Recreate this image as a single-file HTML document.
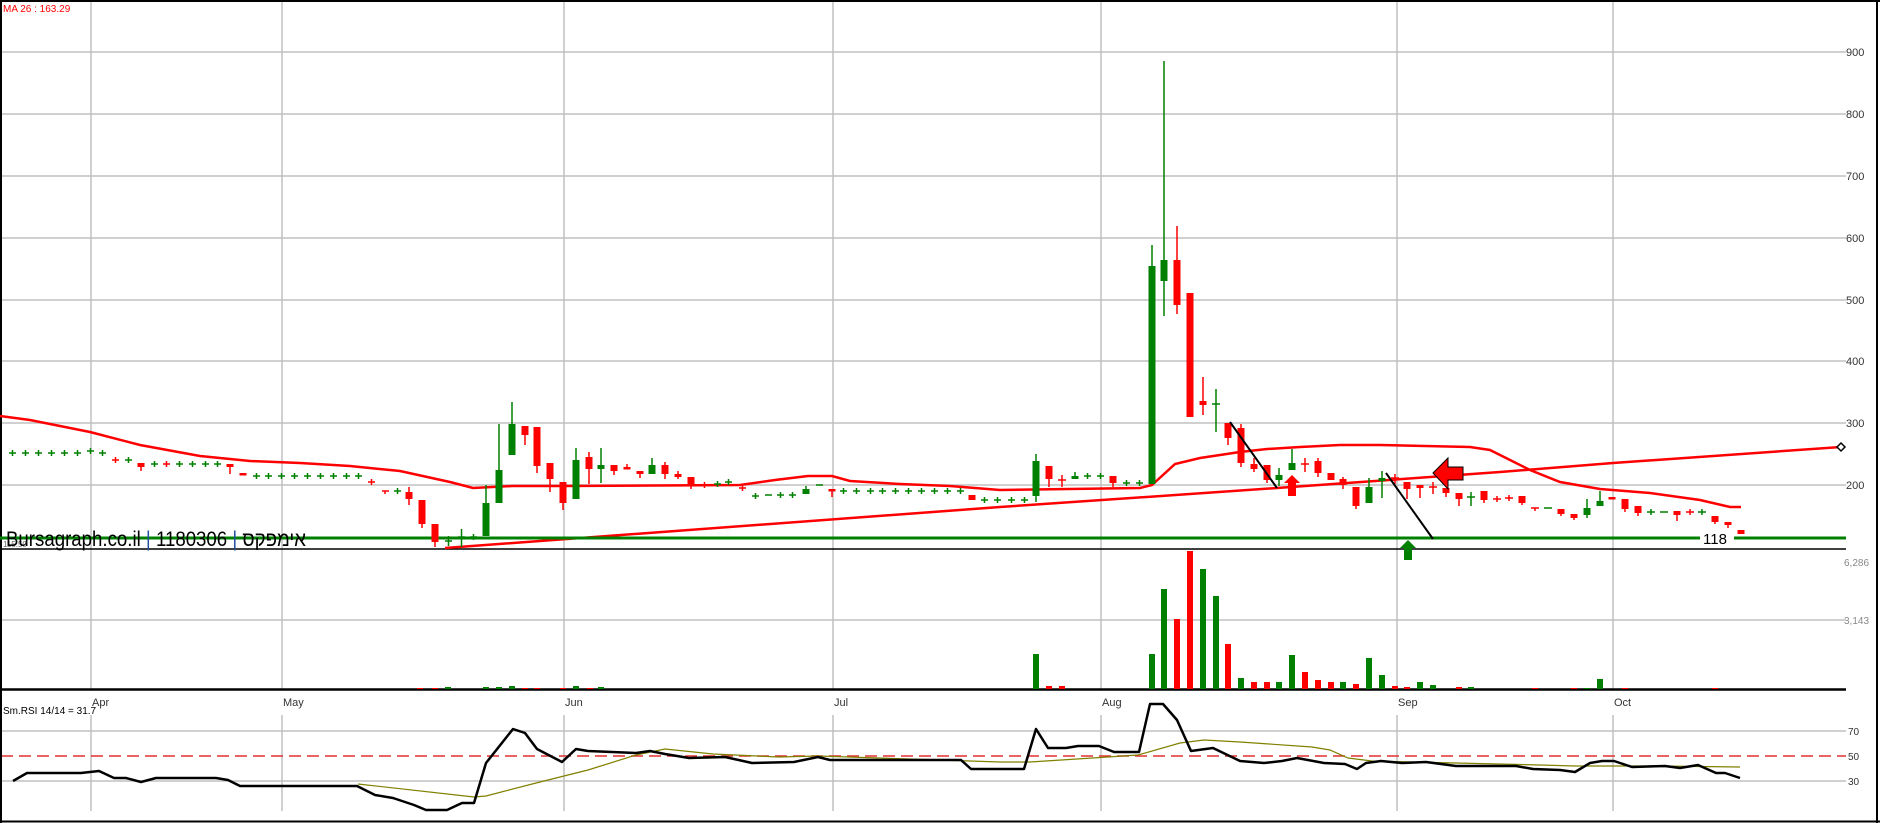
<!DOCTYPE html>
<html><head><meta charset="utf-8"><style>
html,body{margin:0;padding:0;background:#fff;}
svg{display:block;}
text{font-family:"Liberation Sans","Noto Sans CJK JP",sans-serif;}
</style></head><body>
<svg width="1880" height="823" viewBox="0 0 1880 823" xmlns="http://www.w3.org/2000/svg">
<rect width="1880" height="823" fill="#fff"/>
<g stroke="#c0c0c0" stroke-width="1.5" fill="none">
<path d="M1 52H1846M1 114H1846M1 176H1846M1 238H1846M1 300H1846M1 361H1846M1 423H1846M1 485H1846M1 620H1846M1 731H1846M1 781H1846"/>
<path d="M91 0V549M282 0V549M564 0V549M833 0V549M1101 0V549M1397 0V549M1613 0V549"/>
<path d="M91 549V689M282 549V689M564 549V689M833 549V689M1101 549V689M1397 549V689M1613 549V689"/>
<path d="M91 715V811M282 715V811M564 715V811M833 715V811M1101 715V811M1397 715V811M1613 715V811"/>
</g>
<line x1="1" y1="756" x2="1846" y2="756" stroke="#e03030" stroke-width="1.5" stroke-dasharray="12,6"/>
<g stroke="#000" fill="none">
<path d="M1 0V823M0 1H1880M1877 0V823M0 821.5H1880" stroke-width="2"/>
<path d="M0 549H1846" stroke-width="1.5"/>
<path d="M0 689.5H1846" stroke-width="2.5"/>
</g>
<g font-size="11" fill="#333">
<text x="1846" y="56">900</text><text x="1846" y="118">800</text><text x="1846" y="180">700</text><text x="1846" y="242">600</text><text x="1846" y="304">500</text><text x="1846" y="365">400</text><text x="1846" y="427">300</text><text x="1846" y="489">200</text>
</g>
<g font-size="10" fill="#888"><text x="1844" y="566">6,286</text><text x="1844" y="624">3,143</text></g>
<g font-size="10" fill="#333"><text x="1848" y="735">70</text><text x="1848" y="760">50</text><text x="1848" y="785">30</text></g>
<g font-size="11" fill="#333"><text x="92" y="706">Apr</text><text x="283" y="706">May</text><text x="565" y="706">Jun</text><text x="834" y="706">Jul</text><text x="1102" y="706">Aug</text><text x="1398" y="706">Sep</text><text x="1614" y="706">Oct</text></g>
<text x="3" y="714" font-size="10" fill="#000">Sm.RSI 14/14 = 31.7</text>
<text x="3" y="12" font-size="10" fill="#ff0000">MA 26 : 163.29</text>
<g stroke="#ff0000" stroke-width="2.5" fill="none">
<polyline points="0,416 30,420 90,432 140,445 200,456 250,461 300,463 350,466 400,471 450,482 473,488 512,486 563,486 740,485 775,480 808,476 832,476 850,481 900,484 950,486 1000,490 1140,488 1152,485 1175,464 1200,458 1240,452 1267,449 1300,447 1340,445 1380,445 1470,447 1490,450 1530,470 1560,482 1600,489 1650,493 1700,500 1730,507 1741,507"/>
<polyline points="445,548 1000,507 1277,488 1500,472 1613,463 1841,447"/>
</g>
<path d="M1841 443l4 4-4 4-4-4z" fill="#fff" stroke="#000" stroke-width="1.5"/>
<line x1="0" y1="538" x2="1846" y2="538" stroke="#008000" stroke-width="3"/>
<rect x="1700" y="530" width="34" height="16" fill="#fff"/>
<text x="1703" y="544" font-size="15" fill="#000">118</text>
<text x="3" y="547" font-size="8" fill="#666">115.50</text>
<g stroke="#008000" stroke-width="1.5" fill="none">
<path d="M9 453h7M12.5 450v6M22 453h7M25.5 450v6M35 453h7M38.5 450v6M48 453h7M51.5 450v6M61 453h7M64.5 450v6M74 453h7M77.5 450v6M87 451h7M90.5 448v6M99 453h7M102.5 450v6M125 460h7M128.5 457v6M151 464h7M154.5 461v6M176 464h7M179.5 461v6M189 464h7M192.5 461v6M202 464h7M205.5 461v6M214 464h7M217.5 461v6M253 476h7M256.5 473v6M265 476h7M268.5 473v6M278 476h7M281.5 473v6M291 476h7M294.5 473v6M304 476h7M307.5 473v6M317 476h7M320.5 473v6M330 476h7M333.5 473v6M343 476h7M346.5 473v6M355 476h7M358.5 473v6M394 491h7M397.5 488v6M445 541h7M448.5 536v10M458 537h7M461.5 529v18M470 537h7M473.5 534v6M714 484h7M717.5 481v6M725 482h7M728.5 479v6M752 496h7M755.5 493v6M765 495h7M777 495h7M780.5 492v6M789 495h7M792.5 492v6M816 485h7M840 491h7M843.5 488v6M853 491h7M856.5 488v6M867 491h7M870.5 488v6M879 491h7M882.5 488v6M892 491h7M895.5 488v6M905 491h7M908.5 488v6M918 491h7M921.5 488v6M931 491h7M934.5 488v6M944 491h7M947.5 488v6M957 491h7M960.5 488v6M981 500h7M984.5 497v6M994 500h7M997.5 497v6M1008 500h7M1011.5 497v6M1021 500h7M1024.5 497v6M1084 476h7M1087.5 473v6M1097 476h7M1100.5 473v6M1123 483h7M1126.5 480v6M1136 483h7M1139.5 480v6M1212 404h8M1216 389v43M1467 497h8M1471 492v14M1544 508h8M1647 512h8M1651 509v6M1660 512h8M1698 512h8M1702 509v6"/>
</g>
<g stroke="#ff0000" stroke-width="1.5" fill="none">
<path d="M112 460h7M115.5 457v6M163 464h7M166.5 461v6M368 482h7M371.5 479v6M382 491h7M385 491v3M701 485h7M704.5 482v6M739 488h7M742.5 485v6M1058 480h8M1062 475v12M1301 464h8M1305 458v14M1391 478h8M1395 474v10M1429 487h8M1433 482v12M1493 499h8M1497 496v6M1505 498h8M1509 495v6M1531 508h8M1535 508v3M1686 512h8M1690 509v6"/>
</g>
<g stroke="#ff0000" stroke-width="1.5">
<path d="M141 463V471M230 464V474M409 487V505M422 500V528M435 524V547M525 426V445M537 427V473M550 463V492M563 482V510M589 452V484M614 465V475M627 464V469M640 471V478M665 462V479M678 471V479M691 477V489M832 489V497M1049 466V487M1113 476V487M1177 226V314M1203 377V415M1228 423V445M1241 424V467M1254 458V472M1267 465V483M1318 458V477M1343 477V489M1356 487V509M1407 482V499M1420 485V498M1446 488V497M1459 493V506M1484 491V503M1522 496V505M1561 509V516M1574 514V520M1625 499V512M1638 506V516M1677 511V521M1715 516V524M1728 522V528"/>
</g>
<g fill="#ff0000">
<rect x="137.5" y="463" width="7" height="4"/><rect x="226.5" y="464" width="7" height="3"/><rect x="239.5" y="473" width="7" height="2.5"/><rect x="405.5" y="492" width="7" height="7"/><rect x="418.5" y="500" width="7" height="24"/><rect x="431.5" y="524" width="7" height="18"/><rect x="521.5" y="426" width="7" height="9"/><rect x="533.5" y="427" width="7" height="39"/><rect x="546.5" y="463" width="7" height="16"/><rect x="559.5" y="482" width="7" height="21"/><rect x="585.5" y="457" width="7" height="12"/><rect x="610.5" y="465" width="7" height="6"/><rect x="623.5" y="467" width="7" height="2.5"/><rect x="636.5" y="471" width="7" height="3"/><rect x="661.5" y="465" width="7" height="9"/><rect x="674.5" y="474" width="7" height="3"/><rect x="687.5" y="477" width="7" height="9"/><rect x="828.5" y="489" width="7" height="2.5"/><rect x="968.5" y="495" width="7" height="5"/><rect x="1045.5" y="466" width="7" height="13"/><rect x="1109.5" y="476" width="7" height="7"/><rect x="1173.5" y="260" width="7" height="45"/><rect x="1186.5" y="293" width="7" height="124"/><rect x="1199.5" y="401" width="7" height="4"/><rect x="1224.5" y="423" width="7" height="15"/><rect x="1237.5" y="428" width="7" height="35"/><rect x="1250.5" y="464" width="7" height="5"/><rect x="1263.5" y="465" width="7" height="15"/><rect x="1314.5" y="461" width="7" height="12"/><rect x="1327.5" y="473" width="7" height="7"/><rect x="1339.5" y="479" width="7" height="6"/><rect x="1352.5" y="487" width="7" height="19"/><rect x="1403.5" y="482" width="7" height="7"/><rect x="1416.5" y="485" width="7" height="3"/><rect x="1442.5" y="488" width="7" height="5"/><rect x="1455.5" y="493" width="7" height="6"/><rect x="1480.5" y="491" width="7" height="9"/><rect x="1518.5" y="496" width="7" height="7"/><rect x="1557.5" y="509" width="7" height="5"/><rect x="1570.5" y="514" width="7" height="4"/><rect x="1608.5" y="497" width="7" height="2.5"/><rect x="1621.5" y="499" width="7" height="10"/><rect x="1634.5" y="506" width="7" height="7"/><rect x="1673.5" y="511" width="7" height="4"/><rect x="1711.5" y="516" width="7" height="6"/><rect x="1724.5" y="522" width="7" height="3"/><rect x="1737.5" y="530" width="7" height="4"/>
</g>
<g stroke="#008000" stroke-width="1.5">
<path d="M486 485V536M499 424V503M512 402V455M576 448V499M601 448V483M652 458V474M806 486V494M1036 454V502M1075 472V479M1152 245V484M1164 61V316M1279 468V486M1292 449V470M1369 478V503M1382 471V498M1587 499V518M1600 491V506"/>
</g>
<g fill="#008000">
<rect x="482.5" y="503" width="7" height="33"/><rect x="495.5" y="470" width="7" height="33"/><rect x="508.5" y="424" width="7" height="31"/><rect x="572.5" y="460" width="7" height="39"/><rect x="597.5" y="465" width="7" height="4"/><rect x="648.5" y="465" width="7" height="9"/><rect x="802.5" y="489" width="7" height="5"/><rect x="1032.5" y="461" width="7" height="35"/><rect x="1071.5" y="476" width="7" height="3"/><rect x="1148.5" y="266" width="7" height="218"/><rect x="1160.5" y="260" width="7" height="21"/><rect x="1275.5" y="475" width="7" height="5"/><rect x="1288.5" y="463" width="7" height="7"/><rect x="1365.5" y="487" width="7" height="16"/><rect x="1378.5" y="478" width="7" height="3"/><rect x="1583.5" y="508" width="7" height="7"/><rect x="1596.5" y="501" width="7" height="5"/>
</g>
<g stroke="#000" stroke-width="2"><line x1="1230" y1="422" x2="1277" y2="488"/><line x1="1386" y1="473" x2="1433" y2="539"/></g>
<path d="M1292 475l-8 8h4v13h8v-13h4z" fill="#ff0000"/>
<path d="M1408 540l-8 8h4v12h8v-12h4z" fill="#008000"/>
<path d="M1433 473l15-15v9h15v13h-15v9z" fill="#ff0000" stroke="#000" stroke-width="1"/>
<text x="6" y="546" font-size="21" fill="#000" textLength="300" lengthAdjust="spacingAndGlyphs">Bursagraph.co.il <tspan fill="#2050a0">|</tspan> 1180306 <tspan fill="#2050a0">|</tspan> אימפקס</text>
<g fill="#008000">
<rect x="1033" y="654" width="6" height="35"/><rect x="1149" y="654" width="6" height="35"/><rect x="1161" y="589" width="6" height="100"/><rect x="1200" y="569" width="6" height="120"/><rect x="1213" y="596" width="6" height="93"/><rect x="1238" y="678" width="6" height="11"/><rect x="1276" y="682" width="6" height="7"/><rect x="1289" y="655" width="6" height="34"/><rect x="1340" y="682" width="6" height="7"/><rect x="1366" y="658" width="6" height="31"/><rect x="1379" y="675" width="6" height="14"/><rect x="1417" y="682" width="6" height="7"/><rect x="1430" y="685" width="6" height="4"/><rect x="1468" y="687" width="6" height="2"/><rect x="1584" y="688" width="6" height="1"/><rect x="1597" y="679" width="6" height="10"/><rect x="445" y="687" width="6" height="2"/><rect x="483" y="687" width="6" height="2"/><rect x="496" y="687" width="6" height="2"/><rect x="509" y="686" width="6" height="3"/><rect x="573" y="686" width="6" height="3"/><rect x="598" y="687" width="6" height="2"/>
</g>
<g fill="#ff0000">
<rect x="1046" y="686" width="6" height="3"/><rect x="1059" y="686" width="6" height="3"/><rect x="1174" y="619" width="6" height="70"/><rect x="1187" y="551" width="6" height="138"/><rect x="1225" y="644" width="6" height="45"/><rect x="1251" y="682" width="6" height="7"/><rect x="1264" y="682" width="6" height="7"/><rect x="1302" y="672" width="6" height="17"/><rect x="1315" y="680" width="6" height="9"/><rect x="1328" y="682" width="6" height="7"/><rect x="1353" y="684" width="6" height="5"/><rect x="1392" y="686" width="6" height="3"/><rect x="1404" y="687" width="6" height="2"/><rect x="1456" y="687" width="6" height="2"/><rect x="1532" y="688" width="6" height="1"/><rect x="1571" y="688" width="6" height="1"/><rect x="1622" y="688" width="6" height="1"/><rect x="1712" y="688" width="6" height="1"/><rect x="417" y="688" width="6" height="1"/><rect x="432" y="688" width="6" height="1"/><rect x="522" y="688" width="6" height="1"/><rect x="534" y="688" width="6" height="1"/><rect x="560" y="688" width="6" height="1"/><rect x="587" y="688" width="6" height="1"/>
</g>
<polyline fill="none" stroke="#808000" stroke-width="1.2" points="358,784 474,797 486,796 540,782 588,770 636,755 665,749 713,754 779,757 818,756 940,760 1000,762 1030,762 1108,757 1138,755 1180,743 1204,740 1240,742 1312,747 1330,750 1348,758 1372,761 1456,763 1540,765 1575,766 1659,766 1740,767"/>
<polyline fill="none" stroke="#000" stroke-width="2.5" stroke-linejoin="round" points="13,781 27,773 81,773 99,771 114,778 126,778 141,782 156,778 216,778 228,780 240,786 357,786 375,795 393,798 414,805 426,810 447,810 462,803 474,803 486,763 513,729 525,733 537,749 562,762 576,749 588,751 636,753 650,751 665,754 689,758 725,757 752,763 794,762 818,757 830,760 961,760 971,769 1024,769 1036,729 1048,748 1066,748 1078,746 1099,746 1114,752 1139,752 1150,704 1163,704 1177,720 1191,751 1213,748 1240,761 1264,763 1282,761 1297,758 1324,763 1345,764 1357,769 1366,763 1381,761 1402,763 1426,762 1456,766 1516,766 1533,769 1560,770 1575,772 1590,763 1602,761 1614,761 1632,767 1665,766 1680,768 1698,765 1716,773 1725,773 1740,778"/>
</svg>
</body></html>
